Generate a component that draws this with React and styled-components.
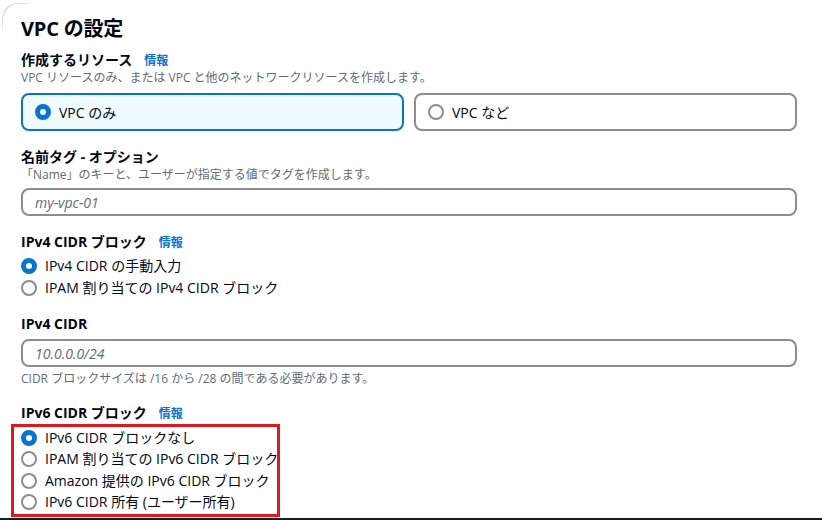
import React from "react";
import styled, { createGlobalStyle } from "styled-components";

const Global = createGlobalStyle`
  html, body { margin: 0; padding: 0; background: #ffffff; }
  body {
    font-family: "Open Sans", "Noto Sans CJK JP", sans-serif;
    color: #000716;
    -webkit-font-smoothing: antialiased;
  }
  * { box-sizing: border-box; }
`;

const Page = styled.div`
  position: relative;
  width: 822px;
  height: 520px;
  overflow: hidden;
  display: flex;
  flex-direction: column;
  &::before {
    content: "";
    position: absolute;
    top: 3px;
    left: 2px;
    width: 28px;
    height: 28px;
    border-top: 1px solid #c6c6cd;
    border-left: 1px solid #c6c6cd;
    border-top-left-radius: 16px;
    -webkit-mask-image: linear-gradient(135deg, #000 20%, transparent 55%);
    mask-image: linear-gradient(135deg, #000 20%, transparent 55%);
  }
`;

const Content = styled.div`
  padding: 17px 25px 0 21px;
  display: flex;
  flex-direction: column;
`;

const Title = styled.h2`
  margin: 0;
  font-size: 20px;
  line-height: 24px;
  font-weight: 700;
  letter-spacing: -0.2px;
`;

const Field = styled.div`
  display: flex;
  flex-direction: column;
  margin-top: ${(p) => p.$top}px;
`;

const LabelRow = styled.div`
  display: flex;
  align-items: baseline;
  gap: 12px;
  height: 20px;
  line-height: 20px;
`;

const Label = styled.span`
  font-size: 14px;
  font-weight: 700;
  color: #000716;
`;

const InfoLink = styled.a`
  font-size: 12px;
  font-weight: 700;
  color: #0972d3;
  text-decoration: none;
`;

const Desc = styled.div`
  font-size: 12px;
  line-height: 16px;
  color: #5f6b7a;
  margin-top: ${(p) => p.$top || 0}px;
`;

const Tiles = styled.div`
  display: grid;
  grid-template-columns: 1fr 1fr;
  gap: 10px;
  margin-top: 7px;
`;

const Tile = styled.div`
  height: 38px;
  border: 2px solid ${(p) => (p.$selected ? "#0972d3" : "#8c8c94")};
  background: ${(p) => (p.$selected ? "#f0fbff" : "#ffffff")};
  border-radius: 8px;
  display: flex;
  align-items: center;
  padding-left: 12px;
  gap: 8px;
  font-size: 14px;
`;

const RadioCircle = styled.span`
  flex: none;
  width: 16px;
  height: 16px;
  border-radius: 50%;
  background: #ffffff;
  border: ${(p) => (p.$checked ? "5px solid #0972d3" : "2px solid #8c8c94")};
`;

const Input = styled.div`
  margin-top: ${(p) => p.$top}px;
  height: 28px;
  border: 2px solid #8c8c94;
  border-radius: 8px;
  display: flex;
  align-items: center;
  padding-left: 12px;
  font-size: 14px;
  font-style: italic;
  color: #5f6b7a;
`;

const RadioGroup = styled.div`
  display: flex;
  flex-direction: column;
  margin-top: ${(p) => p.$top || 0}px;
`;

const RadioRow = styled.div`
  display: flex;
  align-items: center;
  gap: 8px;
  height: ${(p) => p.$h || 22}px;
  font-size: 14px;
  line-height: 18px;
  white-space: nowrap;
  color: #000716;
`;

const Highlight = styled.div`
  margin-top: 1px;
  margin-left: -10px;
  width: 269px;
  border: 3px solid #e0181e;
  padding: 0 0 1px 7px;
`;

const Footer = styled.div`
  margin-top: 1px;
  height: 40px;
  background: #161d26;
`;

function Radio({ checked, label, h }) {
  return (
    <RadioRow $h={h}>
      <RadioCircle $checked={checked} />
      <span>{label}</span>
    </RadioRow>
  );
}

export default function App() {
  return (
    <>
      <Global />
      <Page>
        <Content>
          <Title>VPC の設定</Title>

          <Field $top={9}>
            <LabelRow>
              <Label>作成するリソース</Label>
              <InfoLink>情報</InfoLink>
            </LabelRow>
            <Desc>VPC リソースのみ、または VPC と他のネットワークリソースを作成します。</Desc>
            <Tiles>
              <Tile $selected>
                <RadioCircle $checked />
                <span>VPC のみ</span>
              </Tile>
              <Tile>
                <RadioCircle />
                <span>VPC など</span>
              </Tile>
            </Tiles>
          </Field>

          <Field $top={16}>
            <LabelRow>
              <Label>名前タグ - オプション</Label>
            </LabelRow>
            <Desc>「Name」のキーと、ユーザーが指定する値でタグを作成します。</Desc>
            <Input $top={5}>my-vpc-01</Input>
          </Field>

          <Field $top={16}>
            <LabelRow>
              <Label>IPv4 CIDR ブロック</Label>
              <InfoLink>情報</InfoLink>
            </LabelRow>
            <RadioGroup $top={3}>
              <Radio checked label="IPv4 CIDR の手動入力" />
              <Radio label="IPAM 割り当ての IPv4 CIDR ブロック" />
            </RadioGroup>
          </Field>

          <Field $top={15}>
            <LabelRow>
              <Label>IPv4 CIDR</Label>
            </LabelRow>
            <Input $top={5}>10.0.0.0/24</Input>
            <Desc $top={4}>CIDR ブロックサイズは /16 から /28 の間である必要があります。</Desc>
          </Field>

          <Field $top={16}>
            <LabelRow>
              <Label>IPv6 CIDR ブロック</Label>
              <InfoLink>情報</InfoLink>
            </LabelRow>
            <Highlight>
              <RadioGroup>
                <Radio checked h={21.5} label="IPv6 CIDR ブロックなし" />
                <Radio h={21.5} label="IPAM 割り当ての IPv6 CIDR ブロック" />
                <Radio h={21.5} label="Amazon 提供の IPv6 CIDR ブロック" />
                <Radio h={21.5} label="IPv6 CIDR 所有 (ユーザー所有)" />
              </RadioGroup>
            </Highlight>
          </Field>
        </Content>
        <Footer />
      </Page>
    </>
  );
}
